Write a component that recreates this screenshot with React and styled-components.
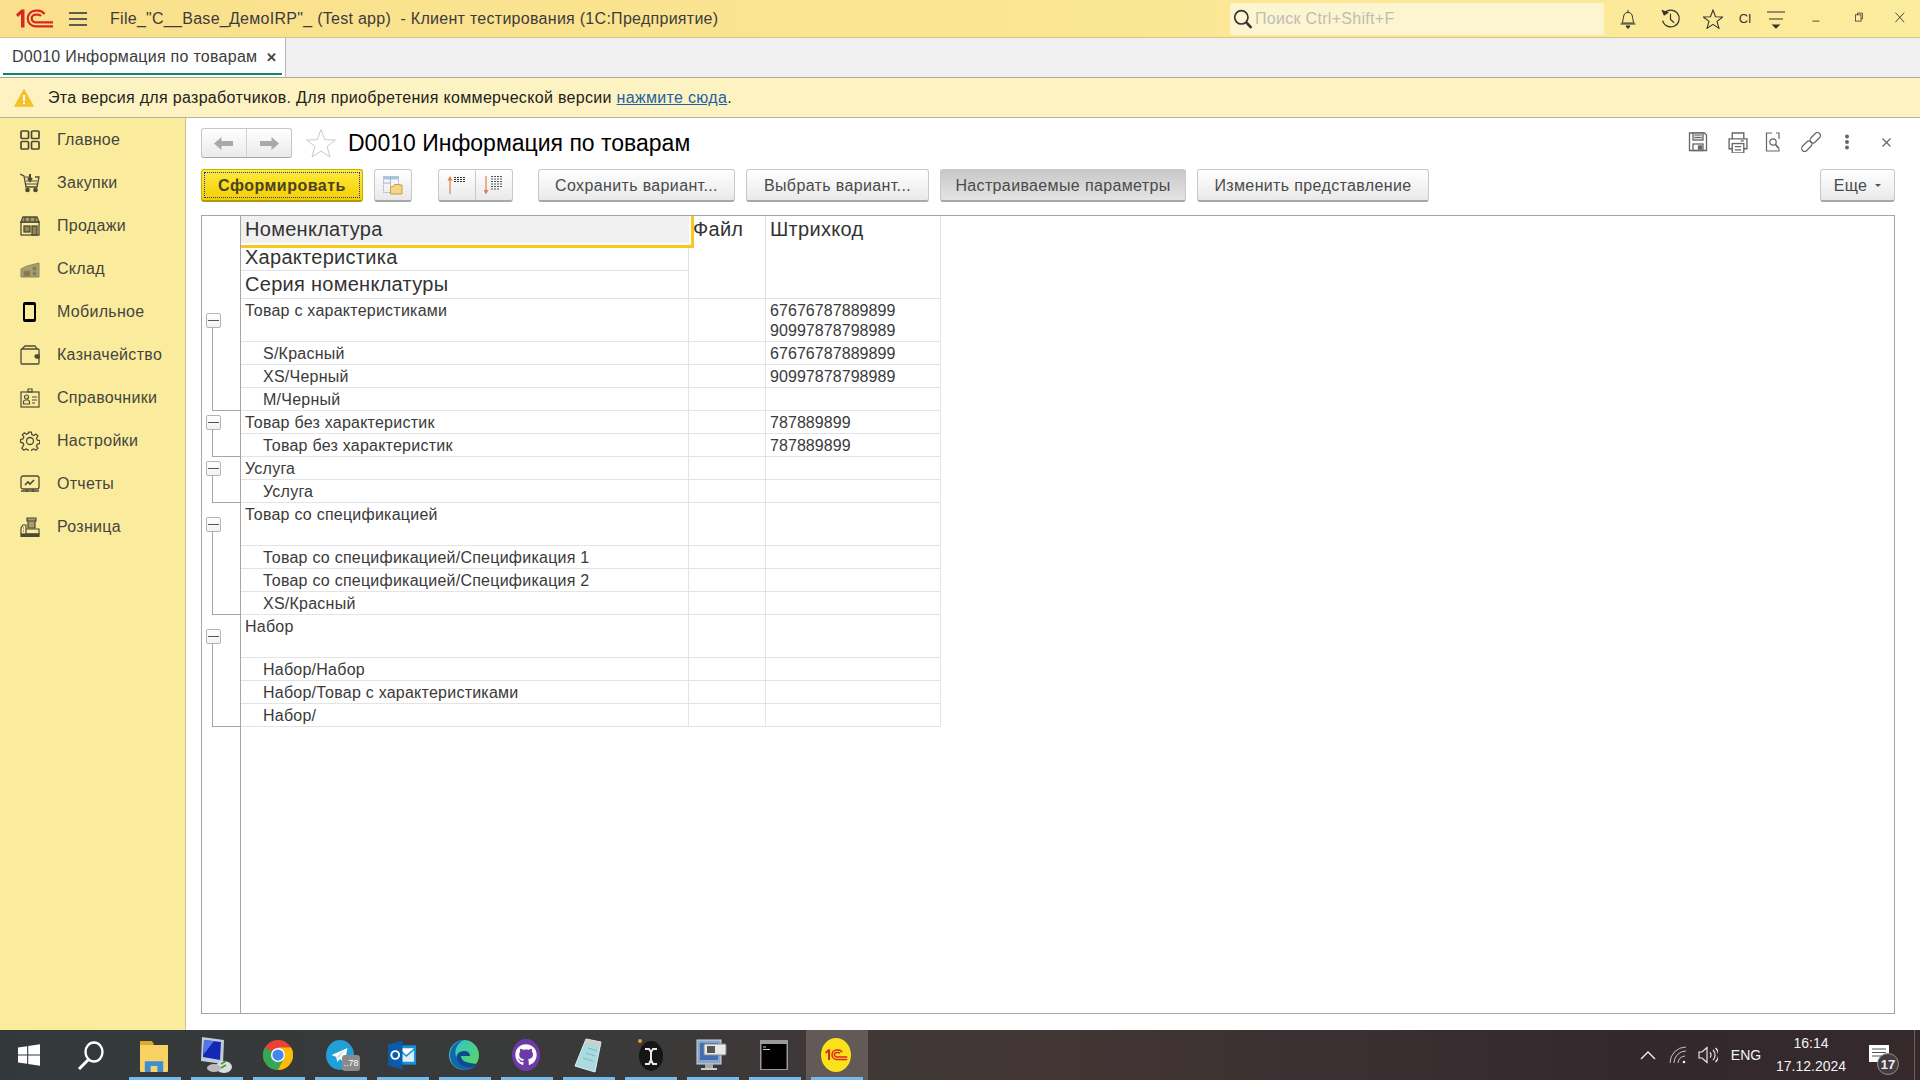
import React from 'react';
import styled, { createGlobalStyle } from 'styled-components';
import { FaGithub } from 'react-icons/fa';

const Global = createGlobalStyle`
  html, body { margin: 0; padding: 0; height: 100%; overflow: hidden; }
  body { font-family: "Liberation Sans", Arial, sans-serif; background: #fff; }
  #root { height: 100%; }
  * { box-sizing: border-box; }
`;

const Page = styled.div`
  height: 1080px; width: 1920px; display: flex; flex-direction: column; overflow: hidden;
`;

/* ---- title bar ---- */
const TitleBar = styled.header`
  height: 38px; flex: none; display: flex; align-items: center; position: relative;
  background: linear-gradient(90deg, #fae08c 0%, #fbe592 50%, #fcec9d 100%);
  border-bottom: 1px solid #d6c580;
`;
const LogoSlot = styled.div` width: 69px; padding-left: 16px; display: flex; flex: none; `;
const Burger = styled.div`
  width: 18px; height: 14px; margin-right: 23px; flex: none;
  border-top: 2px solid #5a5a50; border-bottom: 2px solid #5a5a50; position: relative;
  &::after { content: ""; position: absolute; left: 0; right: 0; top: 4px; height: 2px; background: #5a5a50; }
`;
const AppTitle = styled.div`
  font-size: 16px; color: #3c3c3c; white-space: pre; flex: 1; letter-spacing: 0.28px;
`;
const SearchBox = styled.div`
  width: 374px; height: 32px; background: #fdf5d0; border-radius: 2px; display: flex; align-items: center;
  padding-left: 3px; gap: 2px; font-size: 16px; letter-spacing: 0.3px; color: #bdbdb4;
`;
const SearchGlass = styled.div` color: #333; display: flex; `;
const TopIcons = styled.div`
  display: flex; align-items: center; width: 316px; position: relative; height: 100%;
`;
const TopIcon = styled.div`
  width: ${p => p.$w}px; flex: none; display: flex; justify-content: center; align-items: center;
  color: #333; font-size: 13px;
`;

/* ---- tabs ---- */
const TabBar = styled.div`
  height: 40px; flex: none; background: #f0f0f0; display: flex; border-bottom: 1px solid #a8a8a8;
`;
const Tab = styled.div`
  width: 286px; background: #fff; border-right: 1px solid #b9b9b9; padding: 0 0 1px 12px; display: flex;
  align-items: center; font-size: 16px; letter-spacing: 0.27px; color: #3c3c3c; position: relative; gap: 9px;
  &::after { content: ""; position: absolute; left: 3px; right: 3px; bottom: 2px; height: 2px; background: #0d8a55; }
`;
const TabClose = styled.span` font-size: 13px; font-weight: 700; color: #444; line-height: 1; `;

/* ---- notice ---- */
const Notice = styled.div`
  height: 40px; flex: none; background: #fdf2c1; border-bottom: 1px solid #b5b0a0; display: flex; align-items: center;
  padding-left: 14px; gap: 14px; font-size: 16px; letter-spacing: 0.32px; color: #222;
`;
const NoticeLink = styled.a` color: #1c62a8; text-decoration: underline; `;

/* ---- main ---- */
const Main = styled.div` flex: 1; display: flex; min-height: 0; `;
const Sidebar = styled.nav`
  width: 186px; flex: none; background: #fbec9d; border-right: 1px solid #cfc48c; padding-top: 0;
`;
const NavItem = styled.div`
  height: 43px; display: flex; align-items: center; padding-left: 20px; gap: 17px;
  font-size: 16px; letter-spacing: 0.3px; color: #454540;
`;
const NavIcon = styled.div` width: 20px; height: 20px; display: flex; color: #4c4a36; flex: none; `;

const Form = styled.main`
  flex: 1; min-width: 0; display: flex; flex-direction: column; padding: 10px 25px 16px 15px;
`;
const HeadRow = styled.div` height: 30px; display: flex; align-items: center; flex: none; `;
const NavGroup = styled.div`
  width: 91px; height: 30px; display: flex; border: 1px solid #c6c6c6; border-bottom-color: #a9a9a9; border-radius: 3px;
  background: linear-gradient(#fff, #eaeaea); margin-right: 14px;
`;
const NavHalf = styled.div`
  flex: 1; display: flex; align-items: center; justify-content: center;
  & + & { border-left: 1px solid #d3d3d3; }
`;
const FormTitle = styled.h1`
  margin: 0 0 0 12px; font-weight: 400; font-size: 23px; color: #000; flex: 1; white-space: nowrap;
`;
const FormIcons = styled.div` display: flex; align-items: center; margin-bottom: 2px; `;
const FormIcon = styled.div`
  width: ${p => p.$w}px; margin-left: ${p => p.$ml || 0}px; display: flex; justify-content: center; color: #666;
`;

const Toolbar = styled.div`
  height: 33px; margin-top: 11px; display: flex; flex: none; gap: 11px;
`;
const Button = styled.button`
  height: 33px; width: ${p => p.$w}px; padding: 1px 0 0; margin-left: ${p => p.$ml || 0}px; font: inherit; font-size: 16px;
  letter-spacing: ${p => p.$icon ? 0 : 0.36}px; color: #4a4a4a;
  border: 1px solid #c9c9c9; border-bottom: 2px solid #a8a8a8; border-radius: 3px;
  background: ${p => p.$pressed ? 'linear-gradient(#c8c8c8, #e4e4e4)' : 'linear-gradient(#ffffff, #e9e9e9)'};
  display: flex; align-items: center; justify-content: center; gap: 8px; flex: none; white-space: nowrap;
`;
const PrimaryButton = styled.button`
  height: 33px; width: 162px; padding: 1px 0 0; font: inherit; font-size: 16px; font-weight: 700; letter-spacing: 0.5px; color: #4a4326;
  border: 1px solid #cbb200; border-bottom: 2px solid #ad9a10; border-radius: 3px;
  background: linear-gradient(#fdeb3c, #f6cf00); position: relative;
  &::after { content: ""; position: absolute; inset: 2px; border: 1px dotted #1b2fc0; }
`;
const SplitButton = styled.div`
  width: 75px; height: 33px; display: flex; margin-left: 15px; border: 1px solid #c9c9c9; border-bottom: 2px solid #a8a8a8;
  border-radius: 3px; background: linear-gradient(#fff, #e9e9e9); flex: none;
`;
const SplitHalf = styled.div`
  flex: 1; display: flex; align-items: center; justify-content: center;
  & + & { border-left: 1px solid #c9c9c9; }
`;
const Caret = styled.span`
  width: 0; height: 0; border: 3px solid transparent; border-top: 3px solid #555; margin-top: 3px;
`;
const Spring = styled.div` flex: 1; `;

/* ---- report ---- */
const Report = styled.section`
  flex: 1; margin-top: 13px; border: 1px solid #a6a6a6; display: flex; min-height: 0; background: #fff;
`;
const Rail = styled.div` width: 39px; flex: none; border-right: 1px solid #a6a6a6; `;
const RailHead = styled.div` height: 83px; `;
const RailGroup = styled.div`
  height: ${p => p.$h}px; position: relative; padding: ${p => p.$first / 2 - 7.5}px 0 0 3.5px;
  &::after {
    content: ""; position: absolute; left: 10px; right: 0; bottom: 0;
    top: ${p => p.$first / 2 + 6}px;
    border-left: 1px solid #a6a6a6; border-bottom: 1px solid #a6a6a6;
  }
`;
const TreeBox = styled.div`
  width: 15px; height: 15px; border: 1px solid #b4b4b4; border-radius: 2px; background: linear-gradient(#fff, #f2f2f2);
  display: flex; align-items: center; justify-content: center;
  &::before { content: ""; width: 11px; height: 1px; background: #555; }
`;
const Sheet = styled.div` width: 700px; flex: none; `;
const HeadGrid = styled.div`
  display: grid; grid-template-columns: 448px 77px 175px; grid-template-rows: 28px 27px 28px;
  font-size: 20px; letter-spacing: 0.28px; color: #333;
`;
const HeadCell = styled.div`
  padding-left: 4px; line-height: ${p => p.$lh || 27}px; border-bottom: 1px solid #e2e2e2; border-right: 1px solid #e2e2e2;
`;
const ActiveHead = styled(HeadCell)`
  background: #f0f0f0; position: relative; border: none; margin-bottom: 1px; height: 27px;
  &::after {
    content: ""; position: absolute; left: 0; top: 0; right: -5px; bottom: -5px;
    border-right: 3px solid #f8c81e; border-bottom: 3px solid #f8c81e;
  }
`;
const HeadSpan = styled(HeadCell)` grid-row: 1 / 4; grid-column: ${p => p.$col}; `;
const Row = styled.div`
  display: grid; grid-template-columns: 448px 77px 175px; height: ${p => p.$tall ? 43 : 23}px;
  font-size: 16px; color: #3a3a3a; line-height: 20px;
`;
const Cell = styled.div`
  border-right: 1px solid #e4e4e4; border-bottom: 1px solid #e4e4e4; padding: 2px 0 0 ${p => p.$indent ? 22 : 4}px;
  white-space: nowrap; overflow: hidden;
`;
const NameCell = styled(Cell)` letter-spacing: 0.24px; `;
const CodeCell = styled(Cell)` letter-spacing: 0.06px; `;

/* ---- taskbar ---- */
const Taskbar = styled.footer`
  height: 50px; flex: none; display: flex; align-items: stretch; color: #fff;
  background: linear-gradient(90deg, #33393b 0%, #3a3a3a 30%, #423635 55%, #33292d 85%, #35292c 100%);
`;
const SysSlot = styled.div` width: ${p => p.$w}px; flex: none; display: flex; align-items: center; justify-content: center; `;
const AppSlot = styled.div`
  width: 62px; flex: none; display: flex; align-items: center; justify-content: center; position: relative; padding-right: 2px;
  background: ${p => p.$active ? '#635a58' : 'transparent'};
  &::after { content: ""; position: absolute; left: 5px; right: 5px; bottom: 0; height: 3px; background: #76b9ed; }
`;
const Tray = styled.div`
  flex: 1; display: flex; align-items: center; justify-content: flex-end; position: relative; height: 50px; font-size: 14px;
  color: #f3f3f3;
`;
const TrayItem = styled.div` width: ${p => p.$w}px; display: flex; justify-content: center; flex: none; position: relative; `;
const NotifySlot = styled.div` width: 63px; height: 50px; flex: none; position: relative; padding: 15px 0 0 18px; `;
const Clock = styled.div` width: 80px; text-align: center; font-size: 14px; line-height: 23px; flex: none; `;
const Badge = styled.div`
  position: absolute; left: 26px; top: 23px; width: 22px; height: 22px; border-radius: 50%; background: #453c3f; border: 1.5px solid #8c8c8c;
  font-size: 13px; font-weight: 700; display: flex; align-items: center; justify-content: center; color: #f0f0f0;
`;
const Peek = styled.div` width: 6px; flex: none; border-left: 1px solid #6a6265; height: 50px; `;
const TgBadge = styled.div`
  position: absolute; left: 32px; top: 25px; width: 18px; height: 16px; background: #8a8a8a; border-radius: 3px; font-size: 9px;
  display: flex; align-items: center; justify-content: center; color: #fff;
`;

/* ---- drawings ---- */
const LogoPaths = ({ c, sw = 2.2 }) => (
  <>
    <path d="M0 5.500L5.500 .5H8.500V18.500H5V5L2 8z" fill={c} />
    <path d="M37 17.300H19.500a7.800 7.800 0 0 1 0-15.600h2.500a7.800 7.800 0 0 1 6.500 3.400" fill="none" stroke={c} strokeWidth={sw} />
    <path d="M37 13.300H19.500a3.800 3.800 0 0 1 0-7.600h2.500a3.800 3.800 0 0 1 3 1.400" fill="none" stroke={c} strokeWidth={sw} />
  </>
);
const Logo1C = () => <svg width="37" height="19" viewBox="0 0 37 19"><LogoPaths c="#d6281e" /></svg>;
const S = ({ s = 20, v = 20, children, sw = 1.3, c = 'currentColor' }) => (
  <svg width={s} height={s} viewBox={`0 0 ${v} ${v}`} fill="none" stroke={c} strokeWidth={sw}>{children}</svg>
);
const IHome = () => <S sw={1.7}><rect x="1" y="1" width="7.500" height="7.500" rx="1"/><rect x="11.500" y="1" width="7.500" height="7.500" rx="1"/><rect x="1" y="11.500" width="7.500" height="7.500" rx="1"/><rect x="11.500" y="11.500" width="7.500" height="7.500" rx="1"/></S>;
const ICart = () => <S><path d="M0 1l4 2 2 11h11l2-10h-4"/><path d="M5 4h5M6 8h11M6 11h11" strokeWidth="1"/><path d="M10 1v6M8 5l2 3 2-3" strokeWidth="2"/><circle cx="7.500" cy="17" r="1.700" fill="currentColor"/><circle cx="15.500" cy="17" r="1.700" fill="currentColor"/></S>;
const IShop = () => <S><rect x="1" y="6" width="18" height="13"/><path d="M1 6l2-5h14l2 5z" fill="#a89f68"/><path d="M5 1v5M10 1v5M15 1v5"/><rect x="4" y="10" width="6" height="6" fill="#8f8650"/><rect x="12" y="10" width="5" height="9" fill="#8f8650"/></S>;
const IStock = () => <svg width="20" height="20" viewBox="0 0 20 20" fill="#a8a070" stroke="#8e8658"><path d="M1 18V10l6-3 12-3v14z"/><rect x="4" y="12" width="6" height="5" fill="#7f7850"/><rect x="13" y="8" width="3" height="3" fill="#7f7850"/><rect x="13" y="13" width="3" height="3" fill="#7f7850"/></svg>;
const IPhone = () => <svg width="20" height="20" viewBox="0 0 20 20"><rect x="3" y="0" width="13" height="20" rx="2" fill="#000"/><rect x="5" y="3" width="9" height="14" fill="#fbec9d"/></svg>;
const IWallet = () => <S><path d="M1 5v13a1 1 0 0 0 1 1h16a1 1 0 0 0 1-1V5a1 1 0 0 0-1-1H2a1 1 0 0 0-1 1z"/><path d="M2 4l3-3h10l2 3"/><path d="M19 10h-2.500a1.500 1.500 0 0 0 0 3H19z" fill="currentColor"/></S>;
const IBook = () => <S sw={1.2}><rect x="1" y="4" width="18" height="15"/><path d="M8 1h4v3H8z"/><circle cx="6.500" cy="9" r="2"/><path d="M3.500 16v-2a2 2 0 0 1 2-2h2a2 2 0 0 1 2 2v2z"/><path d="M12 9h5M12 12h5M12 15h3"/></S>;
const IGear = () => <S sw={1.3}><circle cx="10" cy="10" r="3.500"/><path d="M8.500 1h3l.5 2.600 2 .9 2.200-1.500 2 2.100-1.500 2.200.9 2 2.400.5v3l-2.400.5-.9 2 1.500 2.200-2 2-2.200-1.400-2 .8-.5 2.600h-3l-.5-2.600-2-.8-2.200 1.400-2-2L3.800 14l-.9-2L.5 11.500v-3L2.900 8l.9-2L2.300 3.800l2-2.100L6.500 3.200l2-.9z" transform="translate(.1 .1) scale(.98)"/></S>;
const IChart = () => <S sw={1.3}><rect x="1" y="2" width="18" height="13" rx="2"/><path d="M5 11l3-3 2 2 4-4" strokeWidth="1.600"/><path d="M1 17h18M7 15v3M13 15v3" strokeWidth="1.400"/></S>;
const IPos = () => <S sw={1.2}><path d="M7 1h9v3h-9zM8 4h7v7H8z" fill="#a89f68"/><path d="M1 17v-6l2-3h3v9M6 12h13v5H6"/><rect x="1" y="17" width="18" height="2.500" fill="currentColor"/><path d="M3 11h1M3 14h1"/></S>;
const ArrowL = ({ flip }) => <svg width="20" height="15" viewBox="0 0 20 15" style={flip ? { transform: 'scaleX(-1)' } : undefined}><path d="M0 7.500L7.500 1v4H19v5H7.500v4z" fill="#a9a9a9"/></svg>;
const Star = ({ s = 30, c = '#c9c9c9', sw = 1 }) => <svg width={s} height={s} viewBox="0 0 30 30" fill="none" stroke={c} strokeWidth={sw}><path d="M15 1.500l3.800 10.200 10.700.3-8.500 6.600 3 10.400L15 23l-9 6 3-10.400L.5 12l10.700-.3z"/></svg>;

const IBell = () => <S s={20} sw={1}><path d="M4 14c1.500-2 1-7 2.500-9 1.500-2 5.500-2 7 0 1.500 2 1 7 2.500 9z"/><path d="M2.500 15h15M10 1v2"/><path d="M8 17h4l-2 2.500z" fill="currentColor"/></S>;
const IHistory = () => <S s={21} sw={1.1}><path d="M4 5a8 8 0 1 1-1.500 7"/><path d="M2 2l2 4.500L8 4" fill="currentColor"/><path d="M10 5.500V11l3.500 3"/></S>;
const IMenuLines = () => <S s={20} sw={1.2}><path d="M1 3h18M3 10h14"/><path d="M7 16h6l-3 3z" fill="currentColor"/></S>;
const IMin = () => <S s={14} sw={1.2}><path d="M2 13h10"/></S>;
const IRestore = () => <S s={14} sw={1.1}><rect x="2" y="4" width="8" height="9"/><path d="M5 4V1.500h7V10h-2"/></S>;
const IX = () => <S s={16} sw={1.1}><path d="M3 2l11 12M14 2L3 14"/></S>;
const Glass = ({ s = 20 }) => <S s={s} v={18} sw={1.500}><circle cx="7.500" cy="7.500" r="6"/><path d="M12 12l4.500 5" strokeWidth="2.400"/></S>;
const Warn = () => <svg width="20" height="18" viewBox="0 0 20 18"><path d="M10 1L19 17H1z" fill="#f6c02b" stroke="#f6c02b" strokeWidth="1.500" strokeLinejoin="round"/><rect x="9" y="6" width="2" height="6" fill="#fff"/><rect x="9" y="13" width="2" height="2" fill="#fff"/></svg>;
const ISave = () => <S s={20} sw={1.300}><path d="M1.500 1h15l2 2v15.500h-17z"/><rect x="5" y="1" width="10" height="7" fill="#ddd"/><path d="M6.500 3h7M6.500 5.500h7" strokeWidth="1"/><rect x="5" y="12" width="10" height="6.500"/><rect x="10.500" y="14" width="3" height="3" fill="currentColor"/></S>;
const IPrint = () => <S s={21} sw={1.300}><path d="M5 6V1h11v5M5 16H2V6.500h17V16h-3"/><rect x="5" y="11" width="11" height="9"/><path d="M7.500 14h6M7.500 17h6M13 8.500h3" strokeWidth="1.100"/></S>;
const IPreview = () => <S s={20} sw={1.200}><path d="M9 1H3.500v18H16v-2M16 7V1h-3"/><circle cx="10" cy="10" r="3.200"/><path d="M12.500 12.500l3.500 4" strokeWidth="1.800"/></S>;
const ILink = () => <S s={20} sw={1.200}><g transform="rotate(-45 10 10)"><rect x="-2" y="7" width="12" height="6" rx="3"/><rect x="10" y="7" width="12" height="6" rx="3"/></g></S>;
const IDots = () => <svg width="6" height="16" viewBox="0 0 6 16" fill="#666"><circle cx="3" cy="2.500" r="2"/><circle cx="3" cy="8" r="2"/><circle cx="3" cy="13.500" r="2"/></svg>;
const IClose = () => <S s={11} v={11} sw={1.200}><path d="M1.500 1.500l8 8M9.500 1.500l-8 8"/></S>;
const ITableFolder = () => <svg width="20" height="19" viewBox="0 0 20 19" fill="none"><rect x=".5" y=".5" width="15" height="16" stroke="#9bb5cc" strokeDasharray="2 1"/><rect x=".5" y=".5" width="15" height="3" fill="#a5c3dc"/><path d="M.5 7h7M7.500 .5v9" stroke="#9bb5cc"/><path d="M7.500 10.500h3l1-2h5v.5h2.500v9h-11.500z" fill="#f6d685" stroke="#cb9b45"/></svg>;
const ISortUp = () => <svg width="20" height="20" viewBox="0 0 20 20" fill="none"><path d="M3 19V3" stroke="#e37f4e" strokeWidth="1.200"/><path d="M.5 5.500L3 1l2.500 4.500z" fill="#e37f4e"/><path d="M7 2.500h12M7 4.500h12M7 6.500h12" stroke="#333" strokeDasharray="2 1" strokeWidth="1"/></svg>;
const ISortDown = () => <svg width="20" height="20" viewBox="0 0 20 20" fill="none"><path d="M2 1v16" stroke="#e37f4e" strokeWidth="1.200"/><path d="M-.5 15L2 19.500 4.500 15z" fill="#e37f4e"/><path d="M7 1.500h11M7 4h11M7 6.500h11M7 9h11M7 11.500h11M7 14h8" stroke="#555" strokeDasharray="2 1" strokeWidth="1"/></svg>;

const TWin = () => <svg width="22" height="22" viewBox="0 0 20 20" fill="#fff"><path d="M0 3.100L8.300 2v7.500H0zM9.300 1.800L20 .3v9.200H9.300zM0 10.500h8.300V18L0 16.900zM9.300 10.500H20v9.200L9.300 18.200z"/></svg>;
const TSearch = () => <svg width="28" height="29" viewBox="0 0 28 29" fill="none" stroke="#fff" strokeWidth="2.400"><ellipse cx="17" cy="11" rx="8.500" ry="9.500"/><path d="M11 19L2 28" strokeWidth="3"/></svg>;
const TFolder = () => <svg width="28" height="35" viewBox="0 0 29 36"><path d="M0 3h12l2 2v3H0z" fill="#e0a82c"/><path d="M0 7h29v27a1 1 0 0 1-1 1H1a1 1 0 0 1-1-1z" fill="#f9d263"/><path d="M5 35V24h19v11h-6v-6h-7v6z" fill="#3a8fd8"/></svg>;
const TRdp = () => <svg width="32" height="36" viewBox="0 0 32 36"><path d="M2 0l22 3-1 24L1 24z" fill="#c5ccd6"/><path d="M4 3l17 2-1 18-17-3z" fill="#1428b8"/><path d="M4 3l10 1L4 17z" fill="#5577e0"/><ellipse cx="24" cy="30" rx="8" ry="6" fill="#ddd"/><ellipse cx="14" cy="31" rx="7" ry="4" fill="#bbb"/><path d="M21 27l5-3M21 31l5-3" stroke="#3a9a3a" strokeWidth="1.500"/></svg>;
const TChrome = () => <svg width="30" height="30" viewBox="0 0 32 32"><circle cx="16" cy="16" r="16" fill="#ea4335"/><path d="M16 16L2.100 8A16 16 0 0 0 16 32l8-16z" fill="#34a853"/><path d="M16 16l8 0L16 32A16 16 0 0 0 30 8H16z" fill="#fbbc04"/><circle cx="16" cy="16" r="7.500" fill="#fff"/><circle cx="16" cy="16" r="6" fill="#4285f4"/></svg>;
const TTelegram = () => <svg width="28" height="30" viewBox="0 0 30 30" preserveAspectRatio="none"><circle cx="15" cy="15" r="15" fill="#229ed9"/><path d="M6 15L23 8l-3 15-5-4-3 3-1-5z" fill="#fff"/><path d="M11 17l9-7-6 8z" fill="#c4dff0"/></svg>;
const TOutlook = () => <svg width="28" height="30" viewBox="0 0 29 30"><rect x="9" y="5" width="20" height="20" fill="#1490df"/><path d="M11 8h16l-8 7z" fill="#fff"/><path d="M11 10l8 7 8-7v12H11z" fill="#fff" opacity=".85"/><path d="M0 4L15 0v30L0 26z" fill="#0a5ba8"/><circle cx="7.500" cy="15" r="4" fill="none" stroke="#fff" strokeWidth="2"/></svg>;
const TEdge = () => <svg width="30" height="32" viewBox="0 0 30 32"><defs><linearGradient id="eg" x1="0" y1="0" x2="1" y2="1"><stop offset="0" stopColor="#2fc2d0"/><stop offset="1" stopColor="#5fd85a"/></linearGradient></defs><circle cx="15" cy="16" r="15" fill="url(#eg)"/><path d="M1 16C1 8 8 1 15 1 8 4 4 12 8 20c3 7 12 12 20 5-4 6-12 7-17 5C5 28 1 23 1 16z" fill="#1565b5"/><path d="M8 21c-2-5 2-9 7-9 4 0 6 2 6 5H12c0 5 5 7 16 8-7 7-17 3-20-4z" fill="#0f4a8a"/></svg>;
const TGit = () => <svg width="28" height="32" viewBox="0 0 28 32"><ellipse cx="14" cy="16" rx="14" ry="16" fill="#6f3aa8"/></svg>;
const TNote = () => <svg width="28" height="36" viewBox="0 0 28 36"><path d="M12 2l15 3-6 30L1 29z" fill="#a9dbe0" stroke="#dfeff0"/><path d="M12 2l15 3-1 4L10 6z" fill="#cfcfcf"/><path d="M14 11l9 3M12 16l9 3M9 21l10 3" stroke="#7fb8c0"/></svg>;
const TSigma = () => <svg width="25" height="32" viewBox="0 0 25 32"><ellipse cx="13" cy="17" rx="12" ry="15" fill="#151515"/><path d="M7 10h4l2 3 2-3h4M13 13v8M7 25h4l2-4 2 4h4" fill="none" stroke="#e8e8e8" strokeWidth="2"/><circle cx="2" cy="2" r="2" fill="#d9a520"/></svg>;
const TCam = () => <svg width="32" height="34" viewBox="0 0 32 34"><rect x="1" y="2" width="24" height="24" fill="#8aa4c8" stroke="#cfd8e6"/><rect x="4" y="5" width="18" height="17" fill="#3f6fb0"/><rect x="8" y="6" width="22" height="11" rx="1" fill="#e8e8e8" stroke="#888"/><rect x="11" y="8" width="8" height="7" fill="#555"/><rect x="9" y="26" width="8" height="4" fill="#aaa"/><rect x="5" y="30" width="16" height="2" fill="#ccc"/></svg>;
const TConsole = () => <svg width="28" height="30" viewBox="0 0 28 30"><rect width="28" height="30" fill="#9a9a9a"/><rect x="1.500" y="4" width="25" height="25" fill="#000"/><path d="M3 7h3M3 9.500h7" stroke="#ccc"/></svg>;
const T1C = () => <svg width="30" height="34" viewBox="0 0 30 34"><ellipse cx="15" cy="17" rx="15" ry="17" fill="#fbe01c"/><g transform="translate(4 11) scale(.6)"><LogoPaths c="#d6281e" sw={2.500} /></g></svg>;

const ITrayUp = () => <svg width="16" height="10" viewBox="0 0 16 10" fill="none" stroke="#f3f3f3" strokeWidth="1.300"><path d="M1 9l7-7 7 7"/></svg>;
const IWifi = () => <svg width="18" height="18" viewBox="0 0 18 18" fill="none" stroke="#f3f3f3"><path d="M1 17A16 16 0 0 1 17 1M5 17A12 12 0 0 1 17 5" opacity=".75"/><path d="M9 17a8 8 0 0 1 7-7" opacity=".75"/><circle cx="15" cy="16" r="1.300" fill="#f3f3f3" stroke="none"/></svg>;
const ISound = () => <svg width="20" height="18" viewBox="0 0 20 18" fill="none" stroke="#f3f3f3" strokeWidth="1.100"><path d="M1 6h3l5-4.500v15L4 12H1zM12 6.500a3.500 3.500 0 0 1 0 5M15 4a7 7 0 0 1 0 10M17.500 2a9.500 9.500 0 0 1 0 14"/></svg>;
const INotify = () => <svg width="20" height="17" viewBox="0 0 20 17"><rect width="20" height="17" fill="#fff"/><path d="M3 4h14M3 7.500h14M3 11h10" stroke="#555" strokeWidth="1.200"/></svg>;

/* ---- data ---- */
const navItems = [
  ['Главное', IHome], ['Закупки', ICart], ['Продажи', IShop], ['Склад', IStock], ['Мобильное', IPhone],
  ['Казначейство', IWallet], ['Справочники', IBook], ['Настройки', IGear], ['Отчеты', IChart], ['Розница', IPos],
];
const A = '67676787889899', B = '90997878798989', C = '787889899';
const groups = [
  [{ n: 'Товар с характеристиками', c: [A, B], tall: 1 }, { n: 'S/Красный', c: [A], i: 1 }, { n: 'XS/Черный', c: [B], i: 1 }, { n: 'М/Черный', i: 1 }],
  [{ n: 'Товар без характеристик', c: [C] }, { n: 'Товар без характеристик', c: [C], i: 1 }],
  [{ n: 'Услуга' }, { n: 'Услуга', i: 1 }],
  [{ n: 'Товар со спецификацией', tall: 1 }, { n: 'Товар со спецификацией/Спецификация 1', i: 1 }, { n: 'Товар со спецификацией/Спецификация 2', i: 1 }, { n: 'XS/Красный', i: 1 }],
  [{ n: 'Набор', tall: 1 }, { n: 'Набор/Набор', i: 1 }, { n: 'Набор/Товар с характеристиками', i: 1 }, { n: 'Набор/', i: 1 }],
];
const rowH = r => (r.tall ? 43 : 23);
const taskApps = [[TFolder], [TRdp], [TChrome], [TTelegram, '..78'], [TOutlook], [TEdge], [TGit, null, true], [TNote], [TSigma], [TCam], [TConsole], [T1C]];

export default function App() {
  return (
    <Page>
      <Global />
      <TitleBar>
        <LogoSlot><Logo1C /></LogoSlot>
        <Burger />
        <AppTitle>{'File_"C__Base_ДемоIRP"_ (Test app)  - Клиент тестирования (1С:Предприятие)'}</AppTitle>
        <SearchBox><SearchGlass><Glass /></SearchGlass>Поиск Ctrl+Shift+F</SearchBox>
        <TopIcons>
          <TopIcon $w={47}><IBell /></TopIcon>
          <TopIcon $w={39}><IHistory /></TopIcon>
          <TopIcon $w={45}><Star s={20} c="#333" sw={1.6} /></TopIcon>
          <TopIcon $w={20}>Cl</TopIcon>
          <TopIcon $w={42}><IMenuLines /></TopIcon>
          <TopIcon $w={42}><IMin /></TopIcon>
          <TopIcon $w={43}><IRestore /></TopIcon>
          <TopIcon $w={38}><IX /></TopIcon>
        </TopIcons>
      </TitleBar>
      <TabBar>
        <Tab>D0010 Информация по товарам<TabClose>✕</TabClose></Tab>
      </TabBar>
      <Notice>
        <Warn />
        <span>Эта версия для разработчиков. Для приобретения коммерческой версии <NoticeLink>нажмите сюда</NoticeLink>.</span>
      </Notice>
      <Main>
        <Sidebar>
          {navItems.map(([label, Icon]) => (
            <NavItem key={label}><NavIcon><Icon /></NavIcon>{label}</NavItem>
          ))}
        </Sidebar>
        <Form>
          <HeadRow>
            <NavGroup>
              <NavHalf><ArrowL /></NavHalf>
              <NavHalf><ArrowL flip /></NavHalf>
            </NavGroup>
            <Star />
            <FormTitle>D0010 Информация по товарам</FormTitle>
            <FormIcons>
              <FormIcon $w={44}><ISave /></FormIcon>
              <FormIcon $w={34}><IPrint /></FormIcon>
              <FormIcon $w={38}><IPreview /></FormIcon>
              <FormIcon $w={37}><ILink /></FormIcon>
              <FormIcon $w={36}><IDots /></FormIcon>
              <FormIcon $w={18} $ml={12}><IClose /></FormIcon>
            </FormIcons>
          </HeadRow>
          <Toolbar>
            <PrimaryButton>Сформировать</PrimaryButton>
            <Button $w={38} $icon><ITableFolder /></Button>
            <SplitButton>
              <SplitHalf><ISortUp /></SplitHalf>
              <SplitHalf><ISortDown /></SplitHalf>
            </SplitButton>
            <Button $w={197} $ml={14}>Сохранить вариант...</Button>
            <Button $w={183}>Выбрать вариант...</Button>
            <Button $w={246} $pressed>Настраиваемые параметры</Button>
            <Button $w={232}>Изменить представление</Button>
            <Spring />
            <Button $w={75}>Еще <Caret /></Button>
          </Toolbar>
          <Report>
            <Rail>
              <RailHead />
              {groups.map((g, i) => (
                <RailGroup key={i} $h={g.reduce((s, r) => s + rowH(r), 0)} $first={rowH(g[0])}>
                  <TreeBox />
                </RailGroup>
              ))}
            </Rail>
            <Sheet>
              <HeadGrid>
                <ActiveHead>Номенклатура</ActiveHead>
                <HeadSpan $col={2}>Файл</HeadSpan>
                <HeadSpan $col={3}>Штрихкод</HeadSpan>
                <HeadCell>Характеристика</HeadCell>
                <HeadCell>Серия номенклатуры</HeadCell>
              </HeadGrid>
              {groups.flat().map((r, i) => (
                <Row key={i} $tall={r.tall}>
                  <NameCell $indent={r.i}>{r.n}</NameCell>
                  <Cell />
                  <CodeCell>{(r.c || []).map(x => <div key={x}>{x}</div>)}</CodeCell>
                </Row>
              ))}
            </Sheet>
          </Report>
        </Form>
      </Main>
      <Taskbar>
        <SysSlot $w={58}><TWin /></SysSlot>
        <SysSlot $w={66}><TSearch /></SysSlot>
        {taskApps.map(([Icon, badge, git], i) => (
          <AppSlot key={i} $active={i === taskApps.length - 1}>
            <Icon />
            {git && <FaGithub size={22} color="#fff" style={{ position: 'absolute', left: 19 }} />}
            {badge && <TgBadge>{badge}</TgBadge>}
          </AppSlot>
        ))}
        <Tray>
          <TrayItem $w={26}><ITrayUp /></TrayItem>
          <TrayItem $w={34}><IWifi /></TrayItem>
          <TrayItem $w={26}><ISound /></TrayItem>
          <TrayItem $w={50}>ENG</TrayItem>
          <Clock><div>16:14</div><div>17.12.2024</div></Clock>
          <NotifySlot>
            <INotify />
            <Badge>17</Badge>
          </NotifySlot>
          <Peek />
        </Tray>
      </Taskbar>
    </Page>
  );
}
